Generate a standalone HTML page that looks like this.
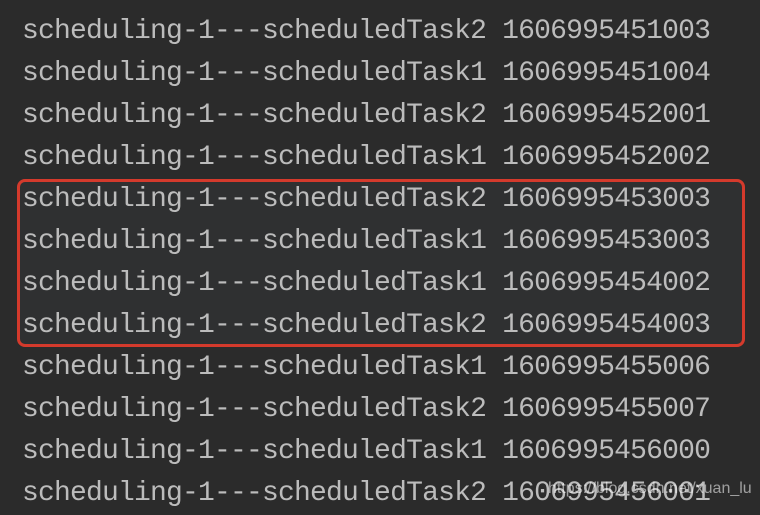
<!DOCTYPE html>
<html><head><style>
html,body{margin:0;padding:0;background:#2b2b2b;width:760px;height:510px;overflow:hidden;}
.t{position:absolute;left:22px;top:11px;font-family:"Liberation Mono",monospace;font-size:28px;letter-spacing:-0.8px;line-height:42px;color:#bcbcbc;white-space:pre;}
.box{position:absolute;left:17px;top:179px;width:722px;height:162px;border:3px solid #d43a2c;border-radius:8px;background:rgba(60,62,68,0.25);}
.wm{position:absolute;left:548px;top:480px;font-family:"Liberation Sans",sans-serif;font-size:16px;color:rgba(255,255,255,0.55);}
</style></head><body>
<div class="box"></div>
<div class="t">scheduling-1---scheduledTask2 1606995451003
scheduling-1---scheduledTask1 1606995451004
scheduling-1---scheduledTask2 1606995452001
scheduling-1---scheduledTask1 1606995452002
scheduling-1---scheduledTask2 1606995453003
scheduling-1---scheduledTask1 1606995453003
scheduling-1---scheduledTask1 1606995454002
scheduling-1---scheduledTask2 1606995454003
scheduling-1---scheduledTask1 1606995455006
scheduling-1---scheduledTask2 1606995455007
scheduling-1---scheduledTask1 1606995456000
scheduling-1---scheduledTask2 1606995456001</div>
<div class="wm">https://blog.csdn.net/xuan_lu</div>
</body></html>
